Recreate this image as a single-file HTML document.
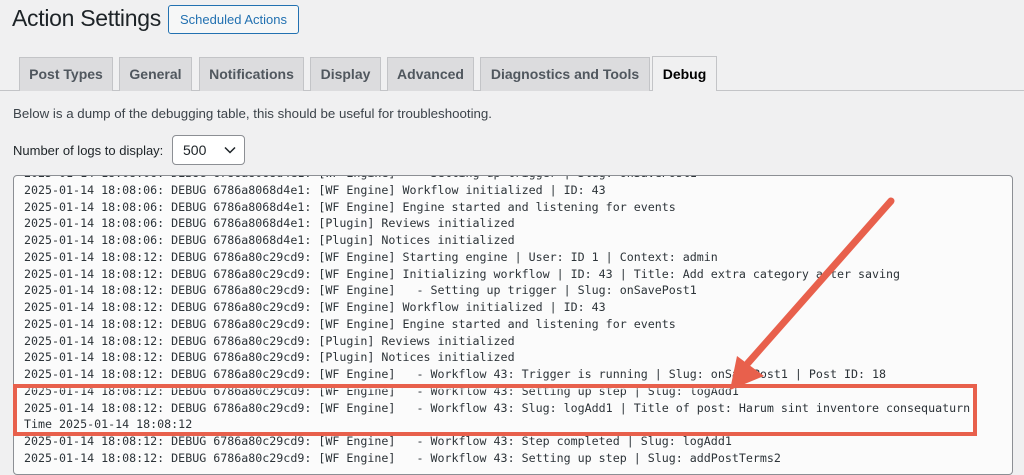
<!DOCTYPE html>
<html><head><meta charset="utf-8"><style>
*{box-sizing:border-box;margin:0;padding:0}
body{width:1024px;height:467px;overflow:hidden;background:#f0f0f1;font-family:"Liberation Sans",Arial,sans-serif;color:#1d2327;position:relative}
.abs{position:absolute}
h1{position:absolute;left:12px;top:5px;font-size:23px;font-weight:400;color:#1d2327;letter-spacing:-0.3px}
.btn{left:168px;top:5px;width:131px;height:29px;border:1px solid #2271b1;border-radius:3px;color:#2271b1;background:#f6f7f7;font-size:13px;text-align:center;line-height:27px}
.tabs{left:0;top:56px;width:1024px;height:35px;border-bottom:1px solid #c3c4c7}
.tab{position:absolute;top:1px;height:34px;background:#dcdcde;border:1px solid #c3c4c7;border-bottom:none;font-size:14px;font-weight:600;color:#50575e;text-align:center;line-height:33px}
.tab.on{background:#f0f0f1;color:#000;height:35px;top:0;line-height:35px}
.desc{left:13px;top:106px;font-size:13.3px;color:#3c434a;white-space:nowrap}
.lbl{left:13px;top:143px;font-size:13px;color:#1d2327;white-space:nowrap}
.sel{left:172px;top:135px;width:73px;height:30px;border:1px solid #8c8f94;border-radius:4px;background:#fff;font-size:14px;padding-left:10px;line-height:28px}
.ta{left:13px;top:175px;width:1000px;height:300px;border:1px solid #8c8f94;border-radius:4px;background:#fbfbfb;overflow:hidden}
.log{position:absolute;left:10px;top:-11px;font-family:"DejaVu Sans Mono","Liberation Mono",monospace;font-size:11.65px;line-height:16.75px;color:#2c3338;white-space:pre}
</style></head><body>
<h1>Action Settings</h1>
<div class="abs btn">Scheduled Actions</div>
<div class="abs tabs">
<div class="tab" style="left:19px;width:94px">Post Types</div>
<div class="tab" style="left:119px;width:73px">General</div>
<div class="tab" style="left:199px;width:105px">Notifications</div>
<div class="tab" style="left:310px;width:71px">Display</div>
<div class="tab" style="left:387px;width:87px">Advanced</div>
<div class="tab" style="left:480px;width:170px">Diagnostics and Tools</div>
<div class="tab on" style="left:652px;width:65px">Debug</div>
</div>
<div class="abs desc">Below is a dump of the debugging table, this should be useful for troubleshooting.</div>
<div class="abs lbl">Number of logs to display:</div>
<div class="abs sel">500<svg style="position:absolute;right:8px;top:10px" width="12" height="8" viewBox="0 0 12 8"><path d="M1 1.5l5 5 5-5" fill="none" stroke="#1d2327" stroke-width="1.5"/></svg></div>
<div class="abs ta"><div class="log">2025-01-14 18:08:06: DEBUG 6786a8068d4e1: [WF Engine]   - Setting up trigger | Slug: onSavePost1
2025-01-14 18:08:06: DEBUG 6786a8068d4e1: [WF Engine] Workflow initialized | ID: 43
2025-01-14 18:08:06: DEBUG 6786a8068d4e1: [WF Engine] Engine started and listening for events
2025-01-14 18:08:06: DEBUG 6786a8068d4e1: [Plugin] Reviews initialized
2025-01-14 18:08:06: DEBUG 6786a8068d4e1: [Plugin] Notices initialized
2025-01-14 18:08:12: DEBUG 6786a80c29cd9: [WF Engine] Starting engine | User: ID 1 | Context: admin
2025-01-14 18:08:12: DEBUG 6786a80c29cd9: [WF Engine] Initializing workflow | ID: 43 | Title: Add extra category after saving
2025-01-14 18:08:12: DEBUG 6786a80c29cd9: [WF Engine]   - Setting up trigger | Slug: onSavePost1
2025-01-14 18:08:12: DEBUG 6786a80c29cd9: [WF Engine] Workflow initialized | ID: 43
2025-01-14 18:08:12: DEBUG 6786a80c29cd9: [WF Engine] Engine started and listening for events
2025-01-14 18:08:12: DEBUG 6786a80c29cd9: [Plugin] Reviews initialized
2025-01-14 18:08:12: DEBUG 6786a80c29cd9: [Plugin] Notices initialized
2025-01-14 18:08:12: DEBUG 6786a80c29cd9: [WF Engine]   - Workflow 43: Trigger is running | Slug: onSavePost1 | Post ID: 18
2025-01-14 18:08:12: DEBUG 6786a80c29cd9: [WF Engine]   - Workflow 43: Setting up step | Slug: logAdd1
2025-01-14 18:08:12: DEBUG 6786a80c29cd9: [WF Engine]   - Workflow 43: Slug: logAdd1 | Title of post: Harum sint inventore consequaturn
Time 2025-01-14 18:08:12
2025-01-14 18:08:12: DEBUG 6786a80c29cd9: [WF Engine]   - Workflow 43: Step completed | Slug: logAdd1
2025-01-14 18:08:12: DEBUG 6786a80c29cd9: [WF Engine]   - Workflow 43: Setting up step | Slug: addPostTerms2</div></div>
<svg class="abs" style="left:0;top:0" width="1024" height="467">
<rect x="15" y="386" width="960" height="48" fill="none" stroke="#e8604c" stroke-width="4"/>
<rect x="18" y="389" width="954" height="42" fill="none" stroke="#fff" stroke-width="1" opacity="0.7"/>
<line x1="891" y1="201" x2="748" y2="363" stroke="#e8604c" stroke-width="7" stroke-linecap="round"/>
<polygon points="737,356 730,390 764,376" fill="#e8604c"/>
</svg>
</body></html>
